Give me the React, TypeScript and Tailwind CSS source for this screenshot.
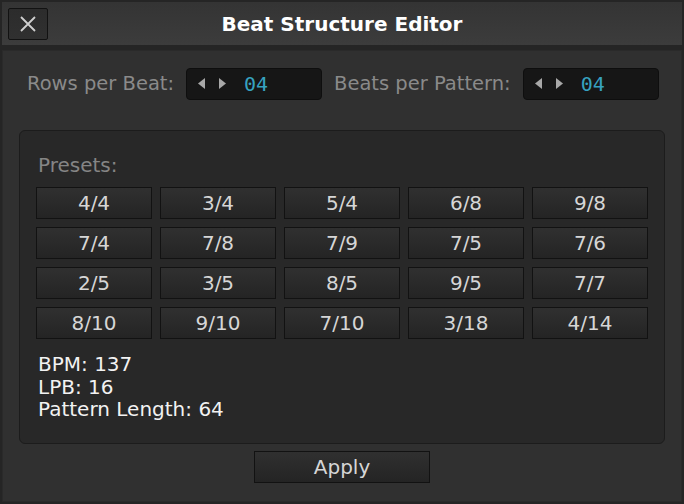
const presets = [
  ['4/4', '3/4', '5/4', '6/8', '9/8'],
  ['7/4', '7/8', '7/9', '7/5', '7/6'],
  ['2/5', '3/5', '8/5', '9/5', '7/7'],
  ['8/10', '9/10', '7/10', '3/18', '4/14'],
];

const font = "font-['DejaVu_Sans',sans-serif]";

function Spinner({ value }: { value: string }) {
  return (
    <div className="flex h-[32px] w-[136px] items-center rounded-[4px] border border-[#0e0e0e] bg-[#161616] pl-[11px]">
      <svg width="30" height="12" viewBox="0 0 30 12" className="shrink-0">
        <polygon points="7,0 7,11 0,5.5" fill="#a8a8a8" />
        <polygon points="21,0 21,11 28,5.5" fill="#a8a8a8" />
      </svg>
      <span className="ml-[16px] font-['DejaVu_Sans_Mono',monospace] text-[20px] leading-none text-[#36a2c0]">
        {value}
      </span>
    </div>
  );
}

function PresetButton({ label, wide }: { label: string; wide?: boolean }) {
  return (
    <button
      type="button"
      className={`flex h-[32px] items-center justify-center border border-[#121212] bg-gradient-to-b from-[#303030] via-[#2a2a2a] to-[#242424] text-[20px] leading-none text-[#d6d6d6] ${
        wide ? 'w-[176px]' : 'w-full'
      }`}
    >
      {label}
    </button>
  );
}

export default function App() {
  return (
    <div className={`flex h-[504px] w-[684px] flex-col bg-[#252525] p-[2px] ${font}`}>
      {/* title bar */}
      <div className="flex h-[43px] shrink-0 items-center bg-gradient-to-b from-[#343434] to-[#3c3c3c] px-[6px]">
        <button
          type="button"
          className="flex h-[32px] w-[40px] items-center justify-center rounded-[2px] border border-[#121212] bg-gradient-to-b from-[#2c2c2c] to-[#303030]"
        >
          <svg width="18" height="18" viewBox="0 0 18 18">
            <path d="M2 2 L16 16 M16 2 L2 16" stroke="#cfcfcf" strokeWidth="1.8" />
          </svg>
        </button>
        <div className="flex-1 text-center text-[20px] font-bold text-white">Beat Structure Editor</div>
        <div className="w-[40px]" />
      </div>

      <div className="h-[5px] shrink-0" />

      {/* body */}
      <div className="flex flex-1 flex-col border border-[#2a2a2a] bg-[#303030]">
        <div className="mt-[17px] flex items-center pl-[24px]">
          <span className="text-[19.5px] text-[#8a8a8a]">Rows per Beat:</span>
          <div className="ml-[12px]">
            <Spinner value="04" />
          </div>
          <span className="ml-[12px] text-[19.5px] text-[#8a8a8a]">Beats per Pattern:</span>
          <div className="ml-[12px]">
            <Spinner value="04" />
          </div>
        </div>

        <div className="mx-[16px] mt-[30px] flex h-[314px] flex-col rounded-[6px] border border-[#1c1c1c] bg-[#282828] px-[16px] pt-[22px]">
          <div className="pl-[2px] text-[20px] leading-[24px] text-[#858585]">Presets:</div>
          <div className="mt-[10px] grid grid-cols-5 gap-[8px]">
            {presets.flat().map((p) => (
              <PresetButton key={p} label={p} />
            ))}
          </div>
          <div className="mt-[14px] pl-[2px] text-[20px] leading-[22.5px] text-[#f2f2f2]">
            <div>BPM: 137</div>
            <div>LPB: 16</div>
            <div>Pattern Length: 64</div>
          </div>
        </div>

        <div className="mt-[7px] flex justify-center">
          <PresetButton label="Apply" wide />
        </div>
      </div>
    </div>
  );
}
